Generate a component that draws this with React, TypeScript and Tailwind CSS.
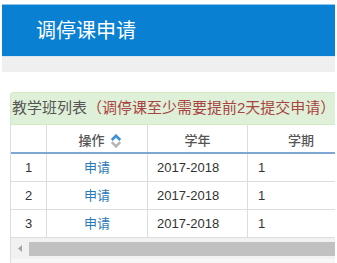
import React from "react";

const font = { fontFamily: '"Liberation Sans", "Noto Sans CJK SC", sans-serif' };

function SortIcon() {
  return (
    <svg width="12" height="14" viewBox="0 0 12 14" className="ml-[5px]">
      <path d="M1.8 6 L6 1.8 L10.2 6" fill="none" stroke="#3a8fd6" strokeWidth="2.6" strokeLinejoin="miter" />
      <path d="M1.8 8.2 L6 12.4 L10.2 8.2" fill="none" stroke="#b5b5b5" strokeWidth="2.6" strokeLinejoin="miter" />
    </svg>
  );
}

const rows = [1, 2, 3];

export default function App() {
  return (
    <div className="w-[337px] h-[263px] bg-white overflow-hidden px-[2px]" style={font}>
      <div className="h-[4px] bg-white" />
      <div className="h-[1px] bg-[#8cc6ee]" />
      <div className="h-[51px] bg-[#0a80d2] flex items-center pl-[34px]">
        <span className="text-white text-[20px] leading-none">调停课申请</span>
      </div>
      <div className="h-[1px] bg-[#d9e6f0]" />
      <div className="h-[15px] bg-[#efefef]" />
      <div className="h-[20px]" />
      <div className="pl-[8px]">
        <div className="h-[33px] bg-[#dff0d8] border border-[#d6e9c6] border-r-0 rounded-tl-[4px] flex items-center pl-[1px] text-[15px] whitespace-nowrap">
          <span className="text-[#555]">教学班列表</span>
          <span className="text-[#a94442]">（调停课至少需要提前2天提交申请）</span>
        </div>
        <div className="border-l border-[#ddd] text-[13px]">
          <div className="flex h-[29px] border-b-2 border-[#7ea7d4] text-[#555] font-medium">
            <div className="w-[36px] border-r border-[#ddd]" />
            <div className="w-[101px] border-r border-[#ddd] flex items-center justify-center pl-[6px] pt-[4px]">
              操作
              <SortIcon />
            </div>
            <div className="w-[100px] border-r border-[#ddd] flex items-center justify-center pt-[4px]">学年</div>
            <div className="flex-1 flex items-center pl-[40px] pt-[4px]">学期</div>
          </div>
          {rows.map((n) => (
            <div key={n} className="flex h-[28px] border-b border-[#ddd] text-[#333]">
              <div className="w-[36px] border-r border-[#ddd] flex items-center justify-center">{n}</div>
              <div className="w-[101px] border-r border-[#ddd] flex items-center justify-center text-[#2a7ab8]">申请</div>
              <div className="w-[100px] border-r border-[#ddd] flex items-center pl-[9px]">2017-2018</div>
              <div className="flex-1 flex items-center pl-[10px]">1</div>
            </div>
          ))}
          <div className="h-[21px] bg-[#f1f1f1] flex items-center">
            <div className="w-[18px] flex items-center justify-center">
              <svg width="5" height="7" viewBox="0 0 5 7">
                <path d="M4 0 L0 3.5 L4 7 Z" fill="#a3a3a3" />
              </svg>
            </div>
            <div className="flex-1 h-[14px] bg-[#c1c1c1]" />
          </div>
          <div className="h-[4px] bg-[#f7f7f7]" />
        </div>
      </div>
    </div>
  );
}
